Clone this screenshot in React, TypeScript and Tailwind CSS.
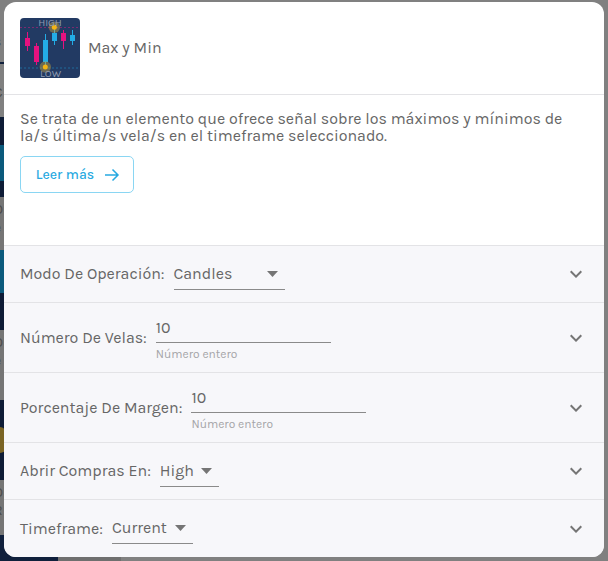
import React from 'react';

function Caret() {
  return (
    <svg width="11" height="6" viewBox="0 0 11 6" aria-hidden="true" className="shrink-0">
      <path d="M0 0h11L5.500 6z" fill="#757575" />
    </svg>
  );
}

function Chevron() {
  return (
    <svg width="24" height="24" viewBox="0 0 24 24" fill="#757575" aria-hidden="true" className="shrink-0">
      <path d="M16.590 8.590 12 13.170 7.410 8.590 6 10l6 6 6-6z" />
    </svg>
  );
}

function Logo() {
  return (
    <svg width="60" height="60" viewBox="0 0 60 60" aria-hidden="true" className="shrink-0">
      <rect width="60" height="60" rx="4" fill="#223a63" />
      <path d="M0 9.500h60" stroke="#7c2a70" strokeWidth="1" strokeDasharray="2 2" />
      <path d="M0 50h60" stroke="#1e6a9c" strokeWidth="1" strokeDasharray="2 2" />
      <g stroke="#e6127f" strokeWidth="1">
        <path d="M7.500 14v19M16.500 25v22M43.500 12v19" />
      </g>
      <g fill="#e6127f">
        <rect x="5" y="20" width="5" height="8" />
        <rect x="14" y="28" width="5" height="16" />
        <rect x="41" y="15" width="5" height="8" />
      </g>
      <g stroke="#23ace6" strokeWidth="1">
        <path d="M25.500 16v33M34.500 7v20M52.500 12v15" />
      </g>
      <g fill="#23ace6">
        <rect x="23" y="22" width="5" height="22" />
        <rect x="32" y="15" width="5" height="8" />
        <rect x="50" y="17" width="5" height="6" />
      </g>
      <circle cx="34.300" cy="9.300" r="5.700" fill="#c9a63f" opacity="0.45" />
      <circle cx="25.300" cy="49" r="5.700" fill="#c9a63f" opacity="0.45" />
      <circle cx="34.300" cy="9.300" r="2.500" fill="#f3b415" />
      <circle cx="25.300" cy="49" r="2.500" fill="#f3b415" />
      <text x="30" y="7.500" textAnchor="middle" fontSize="10.500" fill="#8f9bb1" fontFamily="Karla, sans-serif">HIGH</text>
      <text x="30.500" y="59" textAnchor="middle" fontSize="10.500" fill="#8f9bb1" fontFamily="Karla, sans-serif">LOW</text>
    </svg>
  );
}

function Row({ children, h }: { children: React.ReactNode; h: string }) {
  return (
    <div className={`flex items-center justify-between border-t border-[#e3e3e6] pl-4 pr-4 ${h}`}>
      <div className="flex items-center">{children}</div>
      <Chevron />
    </div>
  );
}

function SelectField({ label, value, w }: { label: string; value: string; w: string }) {
  return (
    <>
      <span>{label}</span>
      <div className={`ml-[9px] flex h-[31px] items-center justify-between border-b border-[#8a8a8a] pr-[7px] ${w}`}>
        <span>{value}</span>
        <Caret />
      </div>
    </>
  );
}

function NumberField({ label }: { label: string }) {
  return (
    <>
      <span>{label}</span>
      <div className="ml-[9px] mt-[1px] w-[175px]">
        <div className="h-[27px] border-b border-[#8a8a8a] leading-[24px]">10</div>
        <div className="mt-[4px] text-[12px] leading-[14px] text-[#a5a5a8]">Número entero</div>
      </div>
    </>
  );
}

// page behind the modal, only its left strip and bottom edge show
function GreyCard({ h, a, b }: { h: string; a: string; b: string }) {
  return (
    <div className={`w-[58px] overflow-hidden bg-[#757575] pt-[4px] text-[14px] leading-[18px] text-[#4b4b4b] ${h}`}>
      <div className="ml-[-6px]">{a}</div>
      <div className="ml-[-6px]">{b}</div>
    </div>
  );
}

function Backdrop() {
  return (
    <div className="flex h-[561px] w-[608px] flex-col bg-[#808080]">
      <div className="h-[34px] w-[58px]" />
      <div className="ml-[-6px] h-[28px] text-[14px] leading-[16px] text-[#4b4b4b]">s</div>
      <div className="h-[2px] w-[58px] bg-[#10203c]" />
      <div className="ml-[-6px] h-[53px] pt-[20px] text-[14px] leading-[18px] text-[#4b4b4b]">C</div>
      <div className="flex h-[80px] w-[58px] flex-col bg-[#0e1c36] pt-[28px]">
        <div className="h-[36px] bg-[#0b5a7c]" />
      </div>
      <GreyCard h="h-[53px]" a="O" b="e" />
      <div className="flex h-[80px] w-[58px] flex-col bg-[#0e1c36]">
        <div className="h-[43px] bg-[#0b5a7c]" />
      </div>
      <GreyCard h="h-[70px]" a="O" b="e" />
      <div className="flex h-[80px] w-[58px] items-center bg-[#0e1c36]">
        <div className="h-[26px] w-[6px] rounded-r-full bg-[#7a6424]" />
      </div>
      <GreyCard h="h-[55px]" a="O" b="R" />
      <div className="flex w-[121px] flex-1">
        <div className="w-[58px] bg-[#10203c]" />
        <div className="flex-1 bg-[#6f6f6f]" />
      </div>
    </div>
  );
}

export default function App() {
  return (
    <div className="relative h-[561px] w-[608px] overflow-hidden font-['Karla','Noto_Sans',sans-serif] text-[16px] text-[#666666]">
      <Backdrop />
      <div className="absolute left-[4px] top-[2px] h-[555px] w-[600px] overflow-hidden rounded-[12px] bg-white">
        <div className="flex h-[92px] items-center gap-2 pl-4">
          <Logo />
          <span>Max y Min</span>
        </div>
        <div className="h-[151px] border-t border-[#e3e3e6] px-4 pt-[15px]">
          <p className="leading-[17px]">
            Se trata de un elemento que ofrece señal sobre los máximos y mínimos de la/s última/s vela/s en el timeframe seleccionado.
          </p>
          <button className="mt-[12px] flex h-[37px] w-[114px] items-center justify-center gap-[10px] rounded-[5px] border border-[#8ad6f3] pl-[2px] text-[14px] font-medium text-[#27a9e1]">
            Leer más
            <svg width="16" height="14" viewBox="0 0 16 14" fill="none" stroke="#27a9e1" strokeWidth="1.500">
              <path d="M1 7h13M8.500 1.500 14 7l-5.500 5.500" />
            </svg>
          </button>
        </div>
        <div className="h-[312px] bg-[#f7f7fa]">
          <Row h="h-[57px]"><SelectField label="Modo De Operación:" value="Candles" w="w-[111px]" /></Row>
          <Row h="h-[70px]"><NumberField label="Número De Velas:" /></Row>
          <Row h="h-[70px]"><NumberField label="Porcentaje De Margen:" /></Row>
          <Row h="h-[57px]"><SelectField label="Abrir Compras En:" value="High" w="w-[59px]" /></Row>
          <Row h="h-[58px]"><SelectField label="Timeframe:" value="Current" w="w-[81px]" /></Row>
        </div>
      </div>
    </div>
  );
}
